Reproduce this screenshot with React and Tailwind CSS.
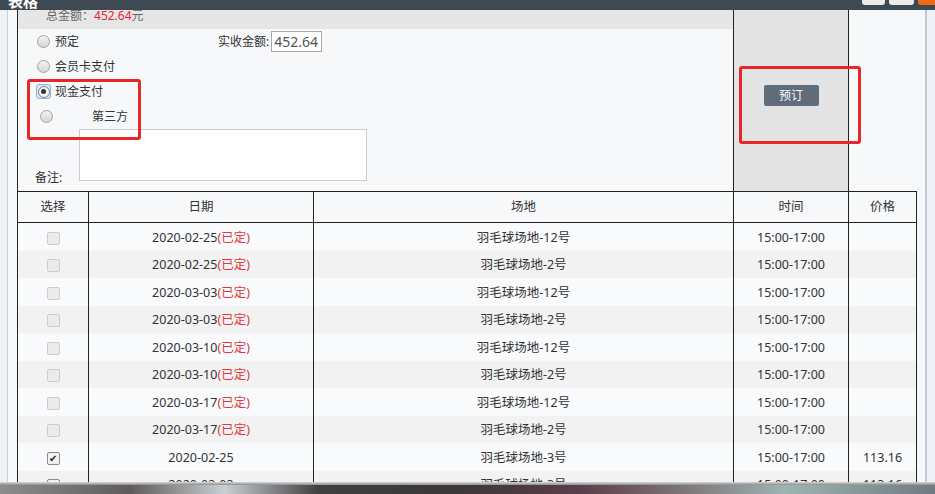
import { Fragment } from 'react'

const rows = [
  { date: '2020-02-25', booked: true, court: '羽毛球场地-12号' },
  { date: '2020-02-25', booked: true, court: '羽毛球场地-2号' },
  { date: '2020-03-03', booked: true, court: '羽毛球场地-12号' },
  { date: '2020-03-03', booked: true, court: '羽毛球场地-2号' },
  { date: '2020-03-10', booked: true, court: '羽毛球场地-12号' },
  { date: '2020-03-10', booked: true, court: '羽毛球场地-2号' },
  { date: '2020-03-17', booked: true, court: '羽毛球场地-12号' },
  { date: '2020-03-17', booked: true, court: '羽毛球场地-2号' },
  { date: '2020-02-25', court: '羽毛球场地-3号', price: '113.16', checked: true },
  { date: '2020-03-03', court: '羽毛球场地-3号', price: '113.16', checked: true },
]

function Radio({ checked }) {
  if (checked) {
    return (
      <span className="flex h-[15px] w-[15px] items-center justify-center rounded-[3px] border border-[#8fb2dc] bg-[#d9e7f7]">
        <span className="flex h-[12px] w-[12px] items-center justify-center rounded-full border border-[#7d8791] bg-[#f4f4f4]">
          <span className="h-[5px] w-[5px] rounded-full bg-[#333]" />
        </span>
      </span>
    )
  }
  return (
    <span className="h-[13px] w-[13px] rounded-full border border-[#a4a4a4] bg-gradient-to-b from-[#f2f2f2] to-[#d6d6d6]" />
  )
}

function Check({ checked }) {
  if (checked) {
    return (
      <span className="flex h-[13px] w-[13px] items-center justify-center rounded-[2px] border border-[#8c8c8c] bg-[#f1f1f1] text-[10px] leading-none text-[#222]">
        ✔
      </span>
    )
  }
  return <span className="h-[13px] w-[13px] rounded-[2px] border border-[#cdcdcd] bg-[#ebebeb]" />
}

export default function App() {
  return (
    <div className="relative flex h-[494px] w-[935px] flex-col overflow-hidden bg-[#f7f8fa] font-['Noto_Sans','Noto_Sans_CJK_SC',sans-serif] text-[#333]">
      {/* title bar, cut off at the top */}
      <div className="flex h-[10px] shrink-0 items-end justify-between overflow-hidden bg-[#3d4a53]">
        <span className="mb-[1px] ml-[8px] text-[15px] leading-none font-bold text-white">表格</span>
        <div className="flex h-full items-start gap-[4px]">
          <span className="h-[5px] w-[23px] rounded-b-[3px] bg-[#e9ebed]" />
          <span className="h-[5px] w-[25px] rounded-b-[3px] bg-[#e9ebed]" />
          <span className="h-[5px] w-[17px] rounded-bl-[3px] bg-[#f06a16]" />
        </div>
      </div>

      {/* dialog body */}
      <div className="flex h-[472px] shrink-0 overflow-hidden">
        <div className="flex w-[17px] shrink-0">
          <div className="w-[7px] bg-[#eef2f7]" />
          <div className="w-[1px] bg-[#c7d1db]" />
          <div className="flex-1 bg-[#f7f8fa]" />
        </div>

        <div className="flex w-[908px] shrink-0 flex-col">
          {/* form row */}
          <div className="flex h-[181px] shrink-0">
            <div className="flex w-[716px] flex-col border-l border-[#222] text-[12px]">
              <div className="h-[19px] overflow-hidden bg-[#e6e6e6] pl-[28px] text-[#666]">
                <p className="-mt-[3px] leading-[18px]">
                  总金额：<span className="text-[#e8243a]">452.64</span>元
                </p>
              </div>
              <div className="flex h-[25px] items-center">
                <div className="flex w-[200px] items-center gap-[5px] pl-[19px]">
                  <Radio />
                  <span>预定</span>
                </div>
                <span>实收金额:</span>
                <span className="ml-[2px] flex h-[21px] w-[51px] items-center border border-[#a9a9a9] bg-white pl-[2px] text-[14px] text-[#555]">
                  452.64
                </span>
              </div>
              <div className="flex h-[25px] items-center gap-[5px] pl-[19px]">
                <Radio />
                <span>会员卡支付</span>
              </div>
              <div className="flex h-[25px] items-center gap-[4px] pl-[18px]">
                <Radio checked />
                <span>现金支付</span>
              </div>
              <div className="flex h-[25px] items-center pl-[22px]">
                <Radio />
                <span className="ml-[39px]">第三方</span>
              </div>
              <div className="flex h-[52px] items-end">
                <span className="mb-[-6px] w-[61px] pl-[17px]">备注:</span>
                <div className="h-[52px] w-[288px] border border-[#cccccc] bg-white" />
              </div>
            </div>
            <div className="flex w-[115px] justify-center border-l border-[#222] bg-[#e3e3e3] pt-[75px]">
              <span className="flex h-[21px] w-[55px] items-center justify-center rounded-[2px] bg-[#5e6d79] text-[12px] text-white">
                预订
              </span>
            </div>
            <div className="flex-1 border-l border-[#222] bg-[#f7f8fa]" />
          </div>

          {/* table */}
          <div className="grid w-[900px] grid-cols-[71px_225px_420px_115px_69px] text-[12.5px]">
            {['选择', '日期', '场地', '时间', '价格'].map((h, i) => (
              <div
                key={h}
                className={`flex h-[32px] items-center justify-center border-y border-l border-[#222] bg-[#f7f8fa] ${i === 4 ? 'border-r' : ''}`}
              >
                {h}
              </div>
            ))}
            {rows.map((r, i) => {
              const bg = i % 2 === 0 ? 'bg-[#f9fafb]' : 'bg-[#f2f2f2]'
              return (
                <Fragment key={i}>
                  <div className={`flex h-[27.5px] items-center justify-center border-l border-[#222] pt-[3px] ${bg}`}>
                    <Check checked={r.checked} />
                  </div>
                  <div className={`flex h-[27.5px] items-center justify-center border-l border-[#222] pt-[3px] ${bg}`}>
                    {r.date}
                    {r.booked && <span className="text-[#e0383e]">(已定)</span>}
                  </div>
                  <div className={`flex h-[27.5px] items-center justify-center border-l border-[#222] pt-[3px] ${bg}`}>
                    {r.court}
                  </div>
                  <div className={`flex h-[27.5px] items-center justify-center border-l border-[#222] pt-[3px] ${bg}`}>
                    15:00-17:00
                  </div>
                  <div className={`flex h-[27.5px] items-center justify-center border-x border-[#222] pt-[3px] ${bg}`}>
                    {r.price}
                  </div>
                </Fragment>
              )
            })}
          </div>
        </div>

        <div className="flex flex-1">
          <div className="w-[2px] bg-[#c2cad3]" />
          <div className="flex-1 bg-[#eef1f5]" />
        </div>
      </div>

      {/* blurred desktop behind the dialog */}
      <div className="h-[3px] shrink-0 bg-gradient-to-b from-[#d9d9d9] to-[#8d8d8d]" />
      <div className="flex-1 bg-[linear-gradient(90deg,#8c8c8e_0%,#5f5b5d_14%,#c9cfd2_24%,#424043_34%,#3a3639_48%,#5b3e4b_62%,#7a6f74_72%,#9fb3b2_84%,#6f7b81_100%)]" />

      {/* red annotation boxes */}
      <div className="pointer-events-none absolute left-[27px] top-[79px] h-[61px] w-[114px] rounded-[3px] border-[3px] border-[#e8262a]" />
      <div className="pointer-events-none absolute left-[739px] top-[66px] h-[78px] w-[122px] rounded-[3px] border-[3px] border-[#e8262a]" />
    </div>
  )
}
